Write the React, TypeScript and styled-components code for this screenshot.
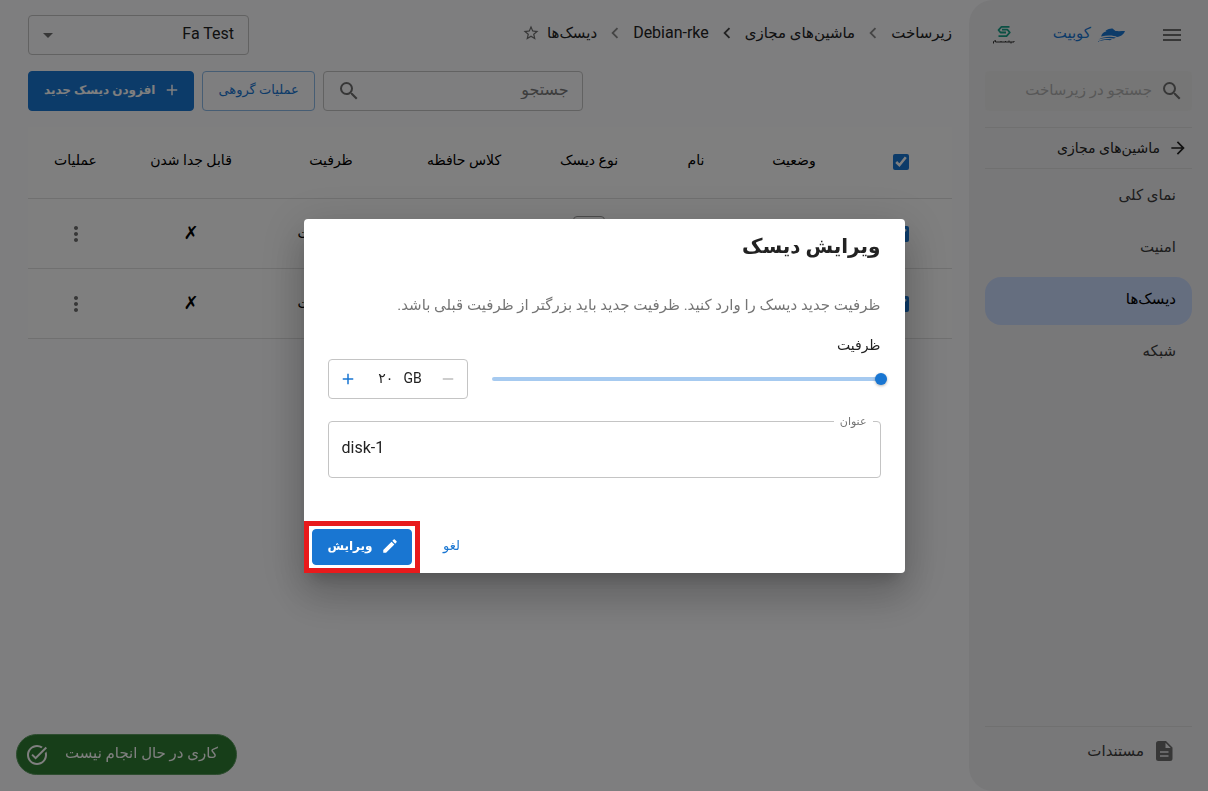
import React from "react";
import styled, { createGlobalStyle } from "styled-components";
import {
  MdAdd,
  MdArrowDropDown,
  MdArrowForward,
  MdChevronLeft,
  MdEdit,
  MdMenu,
  MdMoreVert,
  MdRemove,
  MdSearch,
  MdStarBorder,
  MdTaskAlt,
} from "react-icons/md";

const color = {
  page: "#fcfcff",
  side: "#f1f1f3",
  primary: "#1976d2",
  text: "#222222",
  strong: "#000000",
  muted: "#757575",
  icon: "#6e6e6e",
  line: "#e0e0e0",
  outline: "#c4c4c4",
};

const GlobalStyle = createGlobalStyle`
  * { box-sizing: border-box; }
  body {
    margin: 0;
    background: ${color.page};
    color: ${color.text};
    font: 15px/24px Roboto, "DejaVu Sans", sans-serif;
  }
  button, input, select {
    font: inherit;
    color: inherit;
    margin: 0;
  }
  button { cursor: pointer; }
  svg { display: block; flex: none; }
`;

const Shell = styled.div`
  display: flex;
  min-height: 100vh;
`;

const Sidebar = styled.aside`
  display: flex;
  flex-direction: column;
  flex: 0 0 239px;
  min-width: 0;
  padding: 15px 16px 16px;
  border-start-end-radius: 24px;
  border-end-end-radius: 24px;
  background: ${color.side};
`;

const BrandRow = styled.div`
  display: flex;
  align-items: center;
  height: 40px;
  padding-inline: 8px;
  margin-bottom: 16px;
`;

const IconButton = styled.button<{ $color?: string }>`
  display: inline-flex;
  align-items: center;
  justify-content: center;
  padding: 0;
  border: 0;
  background: none;
  color: ${(p) => p.$color ?? color.icon};
  vertical-align: middle;
`;

const Brand = styled.a`
  display: flex;
  align-items: center;
  gap: 6px;
  margin-inline-start: 35px;
  color: ${color.primary};
  font-size: 15px;
  text-decoration: none;
`;

const BrandName = styled.span`
  padding-bottom: 4px;
`;

const Partner = styled.a`
  margin-inline-start: auto;
`;

const SideSearch = styled.label`
  display: flex;
  align-items: center;
  gap: 8px;
  height: 40px;
  padding: 0 8px;
  margin-bottom: 16px;
  border-radius: 4px;
  background: #ededed;
  color: ${color.icon};
`;

const BareInput = styled.input`
  flex: 1;
  min-width: 0;
  padding: 0 0 2px;
  border: 0;
  outline: 0;
  background: none;
  &::placeholder {
    color: #b0b0b0;
    opacity: 1;
  }
`;

const BackLink = styled.a`
  display: flex;
  align-items: center;
  gap: 8px;
  height: 42px;
  padding: 0 4px;
  margin-bottom: 4px;
  border-block: 1px solid ${color.line};
  color: ${color.text};
  font-size: 14px;
  text-decoration: none;
`;

const Nav = styled.nav`
  display: flex;
  flex-direction: column;
  gap: 4px;
`;

const NavLink = styled.a<{ $active?: boolean }>`
  padding: 10px 16px 14px;
  border-radius: 16px;
  background: ${(p) => (p.$active ? "#cbdcff" : "transparent")};
  color: ${(p) => (p.$active ? color.strong : "#3c3c3c")};
  text-decoration: none;
`;

const DocsLink = styled.a`
  display: flex;
  align-items: center;
  gap: 8px;
  height: 49px;
  padding: 0 16px;
  margin-top: auto;
  border-top: 1px solid ${color.line};
  color: #3c3c3c;
  text-decoration: none;
`;

const Main = styled.main`
  flex: 1;
  min-width: 0;
  padding-block: 15px;
  padding-inline: 17px 28px;
`;

const TopBar = styled.header`
  display: flex;
  justify-content: space-between;
  height: 40px;
  margin-bottom: 16px;
`;

const Crumbs = styled.nav`
  display: flex;
  align-items: center;
  gap: 7px;
  height: 36px;
`;

const Crumb = styled.a<{ $latin?: boolean }>`
  color: ${color.text};
  font-size: ${(p) => (p.$latin ? 16 : 15)}px;
  text-decoration: none;
`;

const Separator = styled.span<{ $dark?: boolean }>`
  color: ${(p) => (p.$dark ? "#444444" : "#8a8a8a")};
`;

const SelectBox = styled.label`
  position: relative;
  flex: 0 0 221px;
  color: ${color.icon};
  svg {
    position: absolute;
    top: 8px;
    left: 8px;
    pointer-events: none;
  }
`;

const Select = styled.select`
  width: 100%;
  height: 40px;
  padding: 0 14px 2px;
  border: 1px solid ${color.outline};
  border-radius: 4px;
  background: none;
  appearance: none;
  color: ${color.text};
  font-size: 16px;
`;

const Toolbar = styled.div`
  display: flex;
  justify-content: flex-end;
  gap: 8px;
  margin-bottom: 16px;
`;

const SearchField = styled.label`
  display: flex;
  align-items: center;
  width: 260px;
  height: 40px;
  padding: 0 13px;
  border: 1px solid ${color.outline};
  border-radius: 4px;
  color: ${color.icon};
  font-size: 16px;
  input::placeholder { color: #7a7a7a; }
`;

const Button = styled.button<{ $kind: "filled" | "outlined" | "text"; $tall?: boolean }>`
  display: inline-flex;
  align-items: center;
  justify-content: center;
  gap: 8px;
  min-width: 64px;
  height: ${(p) => (p.$tall ? 40 : 36)}px;
  padding-block: 0 2px;
  padding-inline: ${(p) => (p.$kind === "text" ? "8px" : p.$kind === "filled" ? "12px 15px" : "15px")};
  border: 1px solid
    ${(p) => (p.$kind === "filled" ? color.primary : p.$kind === "outlined" ? "#8cbae8" : "transparent")};
  border-radius: 4px;
  background: ${(p) => (p.$kind === "filled" ? color.primary : "transparent")};
  color: ${(p) => (p.$kind === "filled" ? "#ffffff" : color.primary)};
  font-size: ${(p) => (p.$kind === "filled" ? 12 : 13)}px;
  font-weight: ${(p) => (p.$kind === "filled" ? 700 : 400)};
`;

const DiskTable = styled.table`
  width: 100%;
  table-layout: fixed;
  border-collapse: collapse;
  background: #ffffff;
`;

const Column = styled.col<{ $w: number }>`
  width: ${(p) => p.$w}px;
`;

const Cell = styled.td<{ $head?: boolean }>`
  height: ${(p) => (p.$head ? 71 : 70)}px;
  padding: ${(p) => (p.$head ? "0 0 4px" : "0")};
  border-bottom: 1px solid ${color.line};
  color: ${color.strong};
  font-size: 14px;
  font-weight: 400;
  text-align: center;
  white-space: nowrap;
`;

const Mark = styled.span`
  font-size: 18px;
`;

const Check = styled.input`
  width: 16px;
  height: 16px;
  accent-color: ${color.primary};
  vertical-align: middle;
`;

const Chip = styled.span`
  display: inline-block;
  padding: 4px 2px;
  border: 1px solid #999999;
  border-radius: 4px;
`;

const TaskPill = styled.button`
  position: fixed;
  left: 16px;
  bottom: 16px;
  display: flex;
  align-items: center;
  gap: 16px;
  height: 41px;
  padding: 0 18px 0 8px;
  border: 1px solid #5c9a60;
  border-radius: 24px;
  background: #2e7d32;
  color: #ffffff;
`;

const PillText = styled.span`
  padding-bottom: 4px;
`;

const Backdrop = styled.div`
  position: fixed;
  inset: 0;
  display: flex;
  align-items: center;
  justify-content: center;
  background: rgba(0, 0, 0, 0.5);
`;

const Dialog = styled.form`
  width: 100%;
  max-width: 601px;
  border-radius: 4px;
  background: #ffffff;
  box-shadow:
    0 11px 15px -7px rgba(0, 0, 0, 0.2),
    0 24px 38px 3px rgba(0, 0, 0, 0.14),
    0 9px 46px 8px rgba(0, 0, 0, 0.12);
`;

const DialogTitle = styled.h2`
  margin: 0;
  padding: 11px 24px 23px;
  font-size: 20px;
  line-height: 32px;
  font-weight: 700;
`;

const DialogBody = styled.div`
  padding: 8px 24px 43px;
`;

const Hint = styled.p`
  margin: 0 0 16px;
  color: ${color.muted};
`;

const FieldLabel = styled.label`
  display: block;
  margin-bottom: 2px;
  font-size: 14px;
`;

const SizeRow = styled.div`
  display: flex;
  align-items: center;
  gap: 24px;
  margin-bottom: 11px;
`;

const Slider = styled.input`
  flex: 1;
  min-width: 0;
  height: 4px;
  margin-inline-start: -6px;
  border-radius: 2px;
  background: #a6caf0;
  appearance: none;
  &::-webkit-slider-thumb {
    width: 12px;
    height: 12px;
    border-radius: 50%;
    background: ${color.primary};
    box-shadow: 0 1px 3px rgba(0, 0, 0, 0.3);
    appearance: none;
  }
`;

const Stepper = styled.div`
  display: flex;
  align-items: center;
  justify-content: space-between;
  width: 140px;
  height: 40px;
  padding: 0 10px;
  border: 1px solid ${color.outline};
  border-radius: 4px;
  font-size: 14px;
`;

const Amount = styled.span`
  display: flex;
  align-items: center;
  gap: 10px;
  padding-bottom: 2px;
`;

const AmountInput = styled.input`
  width: 20px;
  padding: 0;
  border: 0;
  background: none;
  text-align: right;
`;

const Outlined = styled.fieldset`
  height: 68px;
  min-width: 0;
  margin: 0;
  padding: 0 13px;
  border: 1px solid ${color.outline};
  border-radius: 4px;
`;

const Legend = styled.legend`
  margin-inline-start: -6px;
  padding: 0 6px;
  color: ${color.muted};
  font-size: 11px;
  line-height: 24px;
`;

const TextInput = styled.input`
  width: 100%;
  height: 28px;
  padding: 0;
  border: 0;
  outline: 0;
  background: none;
  font-size: 16px;
`;

const Actions = styled.div`
  display: flex;
  align-items: center;
  justify-content: flex-end;
  gap: 8px;
  padding: 8px;
`;

const Highlight = styled.span`
  display: flex;
  outline: 5px solid #e81a1c;
  outline-offset: 3px;
`;

const BoatLogo = () => (
  <svg width="28" height="14" viewBox="0 0 28 14" fill="currentColor" aria-hidden="true">
    <path d="M4 8.500C5 5.500 6.500 4 9.500 3.200L8.500 2.800C11 1 13.500 .3 15.500 .5L18.500 3C22 3.300 25 3 28 3C27 6 24 8.500 20 9C17 7.500 11 7 4 8.500Z" />
    <path d="M1.500 11.500C6 8.800 13 8.200 19 9.500L17 10.500C12 9.600 7 9.800 1.500 11.500Z" />
    <path d="M0 14C4 11.300 10 10.500 15 11.300L13 12.300C9 11.700 5 12.200 0 14Z" />
  </svg>
);

const PartnerLogo = () => (
  <svg width="22" height="20" viewBox="0 0 22 20" fill="none" aria-hidden="true">
    <path
      d="M16.500 1.800H8.500L5.500 5L7.500 7.500H13M9 4.700H14.500L16.800 7.500L13.500 11.200H5.500"
      stroke="#17a088"
      strokeWidth="1.800"
      strokeLinejoin="round"
    />
    <path
      d="M.5 18.500V16.500L2.500 15.500V17H8V16M8 17H12.500V16M12.500 17H16V15.500M16 17H18V18.500M18 17H21V16"
      stroke="#333333"
      strokeWidth="1"
    />
  </svg>
);

const DocsIcon = () => (
  <svg width="24" height="24" viewBox="0 0 24 24" fill={color.icon} fillRule="evenodd" aria-hidden="true">
    <path d="M6.500 2H14L20.500 8.500V19.500A2.500 2.500 0 0 1 18 22H6.500A2.500 2.500 0 0 1 4 19.500V4.500A2.500 2.500 0 0 1 6.500 2ZM13.500 3.800V9H18.700ZM8 12.200V13.800H16.500V12.200ZM8 16.200V17.800H16.500V16.200Z" />
  </svg>
);

const columns = [
  { label: "وضعیت", w: 110 },
  { label: "نام", w: 86 },
  { label: "نوع دیسک", w: 128 },
  { label: "کلاس حافظه", w: 122 },
  { label: "ظرفیت", w: 144 },
  { label: "قابل جدا شدن", w: 136 },
  { label: "عملیات", w: 95 },
];

const navItems = ["نمای کلی", "امنیت", "دیسک‌ها", "شبکه"];

const DiskRow = ({ index }: { index: number }) => (
  <tr>
    <Cell>
      <Check type="checkbox" defaultChecked aria-label={`disk-${index}`} />
    </Cell>
    <Cell />
    <Cell />
    <Cell>{index === 1 ? <Chip>SSD</Chip> : null}</Cell>
    <Cell />
    <Cell>۲۰ گیگابایت</Cell>
    <Cell>
      <Mark>✗</Mark>
    </Cell>
    <Cell>
      <IconButton type="button" aria-label="عملیات">
        <MdMoreVert size={24} />
      </IconButton>
    </Cell>
  </tr>
);

export default function App() {
  return (
    <>
      <GlobalStyle />
      <Shell dir="rtl" lang="fa">
        <Sidebar>
          <BrandRow>
            <IconButton type="button" aria-label="منو">
              <MdMenu size={24} />
            </IconButton>
            <Brand href="#">
              <BoatLogo />
              <BrandName>کوبیت</BrandName>
            </Brand>
            <Partner href="#" aria-label="سبز سیستم">
              <PartnerLogo />
            </Partner>
          </BrandRow>
          <SideSearch>
            <MdSearch size={24} />
            <BareInput placeholder="جستجو در زیرساخت" aria-label="جستجو در زیرساخت" />
          </SideSearch>
          <BackLink href="#">
            <MdArrowForward size={20} />
            ماشین‌های مجازی
          </BackLink>
          <Nav>
            {navItems.map((item, i) => (
              <NavLink key={item} href="#" $active={i === 2}>
                {item}
              </NavLink>
            ))}
          </Nav>
          <DocsLink href="#">
            <DocsIcon />
            مستندات
          </DocsLink>
        </Sidebar>

        <Main>
          <TopBar>
            <Crumbs>
              <Crumb href="#">زیرساخت</Crumb>
              <Separator>
                <MdChevronLeft size={22} />
              </Separator>
              <Crumb href="#">ماشین‌های مجازی</Crumb>
              <Separator $dark>
                <MdChevronLeft size={22} />
              </Separator>
              <Crumb href="#" $latin>
                Debian-rke
              </Crumb>
              <Separator>
                <MdChevronLeft size={22} />
              </Separator>
              <Crumb href="#">دیسک‌ها</Crumb>
              <IconButton type="button" aria-label="نشان کردن">
                <MdStarBorder size={18} />
              </IconButton>
            </Crumbs>
            <SelectBox>
              <Select aria-label="پروژه">
                <option>Fa Test</option>
              </Select>
              <MdArrowDropDown size={24} />
            </SelectBox>
          </TopBar>

          <Toolbar>
            <SearchField>
              <BareInput placeholder="جستجو" aria-label="جستجو" />
              <MdSearch size={24} />
            </SearchField>
            <Button type="button" $kind="outlined" $tall>
              عملیات گروهی
            </Button>
            <Button type="button" $kind="filled" $tall>
              <MdAdd size={18} />
              افزودن دیسک جدید
            </Button>
          </Toolbar>

          <DiskTable>
            <colgroup>
              <Column $w={103} />
              {columns.map((c) => (
                <Column key={c.label} $w={c.w} />
              ))}
            </colgroup>
            <thead>
              <tr>
                <Cell as="th" scope="col" $head>
                  <Check type="checkbox" defaultChecked aria-label="انتخاب همه" />
                </Cell>
                {columns.map((c) => (
                  <Cell as="th" scope="col" key={c.label} $head>
                    {c.label}
                  </Cell>
                ))}
              </tr>
            </thead>
            <tbody>
              <DiskRow index={1} />
              <DiskRow index={2} />
            </tbody>
          </DiskTable>
        </Main>
      </Shell>

      <TaskPill type="button" dir="ltr">
        <MdTaskAlt size={24} />
        <PillText>کاری در حال انجام نیست</PillText>
      </TaskPill>

      <Backdrop dir="rtl" lang="fa">
        <Dialog role="dialog" aria-modal="true" aria-labelledby="dialog-title">
          <DialogTitle id="dialog-title">ویرایش دیسک</DialogTitle>
          <DialogBody>
            <Hint>ظرفیت جدید دیسک را وارد کنید. ظرفیت جدید باید بزرگتر از ظرفیت قبلی باشد.</Hint>
            <FieldLabel htmlFor="capacity">ظرفیت</FieldLabel>
            <SizeRow>
              <Slider id="capacity" type="range" min={20} max={1000} defaultValue={20} />
              <Stepper>
                <IconButton type="button" aria-label="کاهش" $color="#bdbdbd">
                  <MdRemove size={18} />
                </IconButton>
                <Amount>
                  GB
                  <AmountInput defaultValue="۲۰" aria-label="ظرفیت به گیگابایت" />
                </Amount>
                <IconButton type="button" aria-label="افزایش" $color={color.primary}>
                  <MdAdd size={18} />
                </IconButton>
              </Stepper>
            </SizeRow>
            <Outlined>
              <Legend>
                <label htmlFor="disk-title">عنوان</label>
              </Legend>
              <TextInput id="disk-title" dir="ltr" defaultValue="disk-1" />
            </Outlined>
          </DialogBody>
          <Actions>
            <Button type="button" $kind="text">
              لغو
            </Button>
            <Highlight>
              <Button type="submit" $kind="filled">
                <MdEdit size={18} />
                ویرایش
              </Button>
            </Highlight>
          </Actions>
        </Dialog>
      </Backdrop>
    </>
  );
}
